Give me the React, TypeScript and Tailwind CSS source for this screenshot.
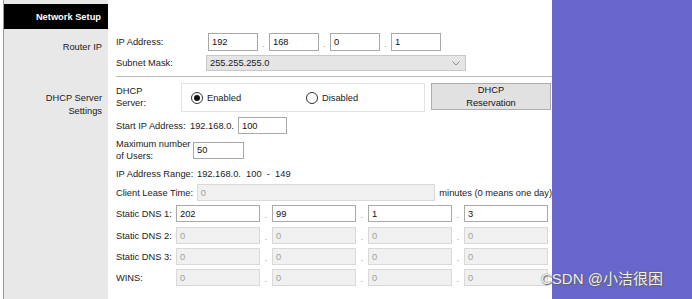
import React from 'react';

const font = "font-['Liberation_Sans',Arial,sans-serif]";

const Field: React.FC<{ value: string; w: string; disabled?: boolean }> = ({ value, w, disabled }) => (
  <div
    className={`${w} h-[17px] flex items-center pl-[3px] border ${
      disabled ? 'bg-[#f0f0f0] border-[#d9d9d9] text-[#a0a0a0]' : 'bg-white border-[#a9a9a9] text-[#111]'
    }`}
  >
    {value}
  </div>
);

const Dot: React.FC<{ w: string }> = ({ w }) => (
  <div className={`${w} text-center text-[#999] pt-[3px]`}>.</div>
);

const Radio: React.FC<{ checked?: boolean; label: string }> = ({ checked, label }) => (
  <div className="flex items-center gap-[4px]">
    <div className="w-[12px] h-[12px] rounded-full border border-[#333] bg-white flex items-center justify-center">
      {checked && <div className="w-[6px] h-[6px] rounded-full bg-[#111]" />}
    </div>
    <span>{label}</span>
  </div>
);

const dnsRows: { label: string; values: string[]; disabled?: boolean }[] = [
  { label: 'Static DNS 1:', values: ['202', '99', '1', '3'] },
  { label: 'Static DNS 2:', values: ['0', '0', '0', '0'], disabled: true },
  { label: 'Static DNS 3:', values: ['0', '0', '0', '0'], disabled: true },
  { label: 'WINS:', values: ['0', '0', '0', '0'], disabled: true },
];

export default function App() {
  return (
    <div className={`relative w-[692px] h-[299px] bg-white flex overflow-hidden text-[9.3px] leading-[12px] text-[#1a1a1a] ${font}`}>
      {/* Sidebar */}
      <div className="ml-[3px] w-[105px] h-full border-l border-[#9a9a9a] bg-[#e8e8e8] flex flex-col">
        <div className="mt-[4px] h-[25px] bg-black text-white font-bold flex items-center justify-end pr-[7px]">
          Network Setup
        </div>
        <div className="mt-[12px] text-right pr-[6px]">Router IP</div>
        <div className="mt-[39px] text-right pr-[6px] leading-[13px]">
          DHCP Server
          <br />
          Settings
        </div>
      </div>

      {/* Main */}
      <div className="w-[444px] pl-[8px] pt-[33px] flex flex-col">
        <div className="h-[18px] flex items-center">
          <div className="w-[92px]">IP Address:</div>
          <Field value="192" w="w-[50px] !h-[18px]" />
          <Dot w="w-[11px]" />
          <Field value="168" w="w-[50px] !h-[18px]" />
          <Dot w="w-[11px]" />
          <Field value="0" w="w-[50px] !h-[18px]" />
          <Dot w="w-[11px]" />
          <Field value="1" w="w-[50px] !h-[18px]" />
        </div>

        <div className="mt-[4px] h-[16px] flex items-center">
          <div className="w-[90px]">Subnet Mask:</div>
          <div className="w-[260px] h-[16px] bg-[#e5e5e5] border border-[#c8c8c8] flex items-center justify-between pl-[3px] pr-[5px]">
            <span>255.255.255.0</span>
            <svg width="8" height="5" viewBox="0 0 8 5" fill="none">
              <path d="M0.5 0.5 L4 4 L7.5 0.5" stroke="#8a8a8a" strokeWidth="1" />
            </svg>
          </div>
        </div>

        <div className="mt-[5px] h-px bg-[#b9b9b9]" />

        <div className="mt-[6px] flex items-start">
          <div className="w-[65px] pt-[2px]">
            DHCP
            <br />
            Server:
          </div>
          <div className="w-[244px] h-[29px] border border-[#e3e3e3] bg-white flex items-center pl-[9px]">
            <div className="w-[115px]">
              <Radio checked label="Enabled" />
            </div>
            <Radio label="Disabled" />
          </div>
          <button className="ml-[6px] w-[120px] h-[27px] bg-[#e1e1e1] border border-[#adadad] flex flex-col items-center justify-center leading-[13px] text-[#111]">
            <span>DHCP</span>
            <span>Reservation</span>
          </button>
        </div>

        <div className="mt-[5px] h-[17px] flex items-center">
          <div className="w-[74px]">Start IP Address:</div>
          <div className="w-[48px]">192.168.0.</div>
          <Field value="100" w="w-[49px]" />
        </div>

        <div className="mt-[4px] h-[24px] flex items-center">
          <div className="w-[77px]">
            Maximum number
            <br />
            of Users:
          </div>
          <Field value="50" w="w-[51px]" />
        </div>

        <div className="mt-[3px] h-[17px] flex items-center">
          <div className="w-[81px]">IP Address Range:</div>
          <div className="whitespace-pre">192.168.0.  100  -  149</div>
        </div>

        <div className="mt-[2px] h-[17px] flex items-center">
          <div className="w-[81px]">Client Lease Time:</div>
          <Field value="0" w="w-[239px]" disabled />
          <div className="ml-[4px] whitespace-nowrap">minutes (0 means one day)</div>
        </div>

        {dnsRows.map((row, i) => (
          <div key={row.label} className={`${i === 1 ? 'mt-[5px]' : 'mt-[4px]'} h-[17px] flex items-center`}>
            <div className="w-[60px]">{row.label}</div>
            {row.values.map((v, j) => (
              <React.Fragment key={j}>
                {j > 0 && <Dot w="w-[12px]" />}
                <Field value={v} w="w-[84px]" disabled={row.disabled} />
              </React.Fragment>
            ))}
          </div>
        ))}
      </div>

      {/* Right panel */}
      <div className="flex-1 bg-[#6666cc]" />

      {/* Watermark */}
      <div className="absolute left-[541px] top-[270px] text-[15px] leading-[18px] text-[#eeeeee] whitespace-nowrap font-['Liberation_Sans','Noto_Sans_CJK_SC',sans-serif] [text-shadow:0_0_1px_#555,1px_1px_1px_#666]">
        CSDN @小洁很困
      </div>
    </div>
  );
}
